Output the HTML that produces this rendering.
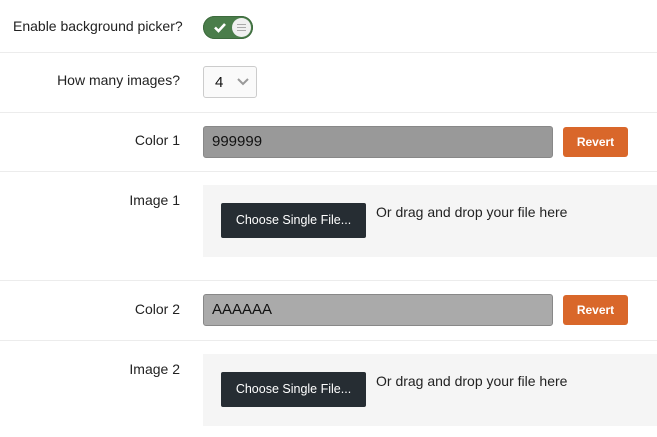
<!DOCTYPE html><html><head><style>
body{margin:0;width:657px;height:437px;background:#fff;font-family:"Liberation Sans",sans-serif;position:relative;overflow:hidden;color:#222}
.a{position:absolute}
.sep{position:absolute;left:0;width:657px;height:1px;background:#ececec}
.lbl{position:absolute;right:477px;font-size:14px;white-space:nowrap}
.inp{position:absolute;left:203px;border:1px solid #888;border-radius:3px;font-size:15px;line-height:30px;padding-left:8px;box-sizing:border-box;width:350px;height:32px;color:#111}
.rev{position:absolute;left:563px;width:65px;height:30px;background:#d9672a;border-radius:3px;color:#fff;font-size:12px;font-weight:bold;text-align:center;line-height:30px}
.dz{position:absolute;left:203px;width:454px;height:72px;background:#f5f5f5}
.btn{position:absolute;left:18px;top:18px;width:145px;height:35px;background:#262d33;border-radius:2px;color:#fff;font-size:12.5px;text-align:center;line-height:35px}
.dt{position:absolute;left:173px;top:19px;font-size:14px;color:#222}
</style></head><body>
<div class="a" style="left:13px;top:18px;font-size:14px">Enable background picker?</div>
<div class="a" style="left:203px;top:16px;width:50px;height:23px;border-radius:12px;background:#4a7d4a;box-shadow:inset 0 0 0 1px #3d6a3d">
<svg class="a" style="left:10px;top:6px" width="14" height="11" viewBox="0 0 14 11"><path d="M2 5.5l3.5 3.5L12 2" stroke="#fff" stroke-width="2.6" fill="none"/></svg>
<div class="a" style="left:29px;top:2px;width:19px;height:19px;border-radius:50%;background:#f0f0f0">
<div class="a" style="left:5px;top:6px;width:9px;height:1px;background:#aaa;box-shadow:0 3px 0 #aaa,0 6px 0 #aaa"></div></div></div>
<div class="sep" style="top:52px"></div>
<div class="lbl" style="top:72px">How many images?</div>
<div class="a" style="left:203px;top:66px;width:54px;height:32px;border:1px solid #ccc;border-radius:3px;background:#fafafa;box-sizing:border-box">
<span class="a" style="left:11px;top:7px;font-size:15px;color:#111">4</span>
<svg class="a" style="left:33px;top:11px" width="12" height="8" viewBox="0 0 12 8"><path d="M1 1l5 5 5-5" stroke="#999" stroke-width="2" fill="none"/></svg></div>
<div class="sep" style="top:112px"></div>
<div class="lbl" style="top:132px">Color 1</div>
<div class="inp" style="top:126px;background:#999">999999</div>
<div class="rev" style="top:127px">Revert</div>
<div class="sep" style="top:171px"></div>
<div class="lbl" style="top:192px">Image 1</div>
<div class="dz" style="top:185px"><div class="btn">Choose Single File...</div><div class="dt">Or drag and drop your file here</div></div>
<div class="sep" style="top:280px"></div>
<div class="lbl" style="top:301px">Color 2</div>
<div class="inp" style="top:294px;background:#aaa">AAAAAA</div>
<div class="rev" style="top:295px">Revert</div>
<div class="sep" style="top:340px"></div>
<div class="lbl" style="top:361px">Image 2</div>
<div class="dz" style="top:354px"><div class="btn">Choose Single File...</div><div class="dt">Or drag and drop your file here</div></div>
</body></html>
